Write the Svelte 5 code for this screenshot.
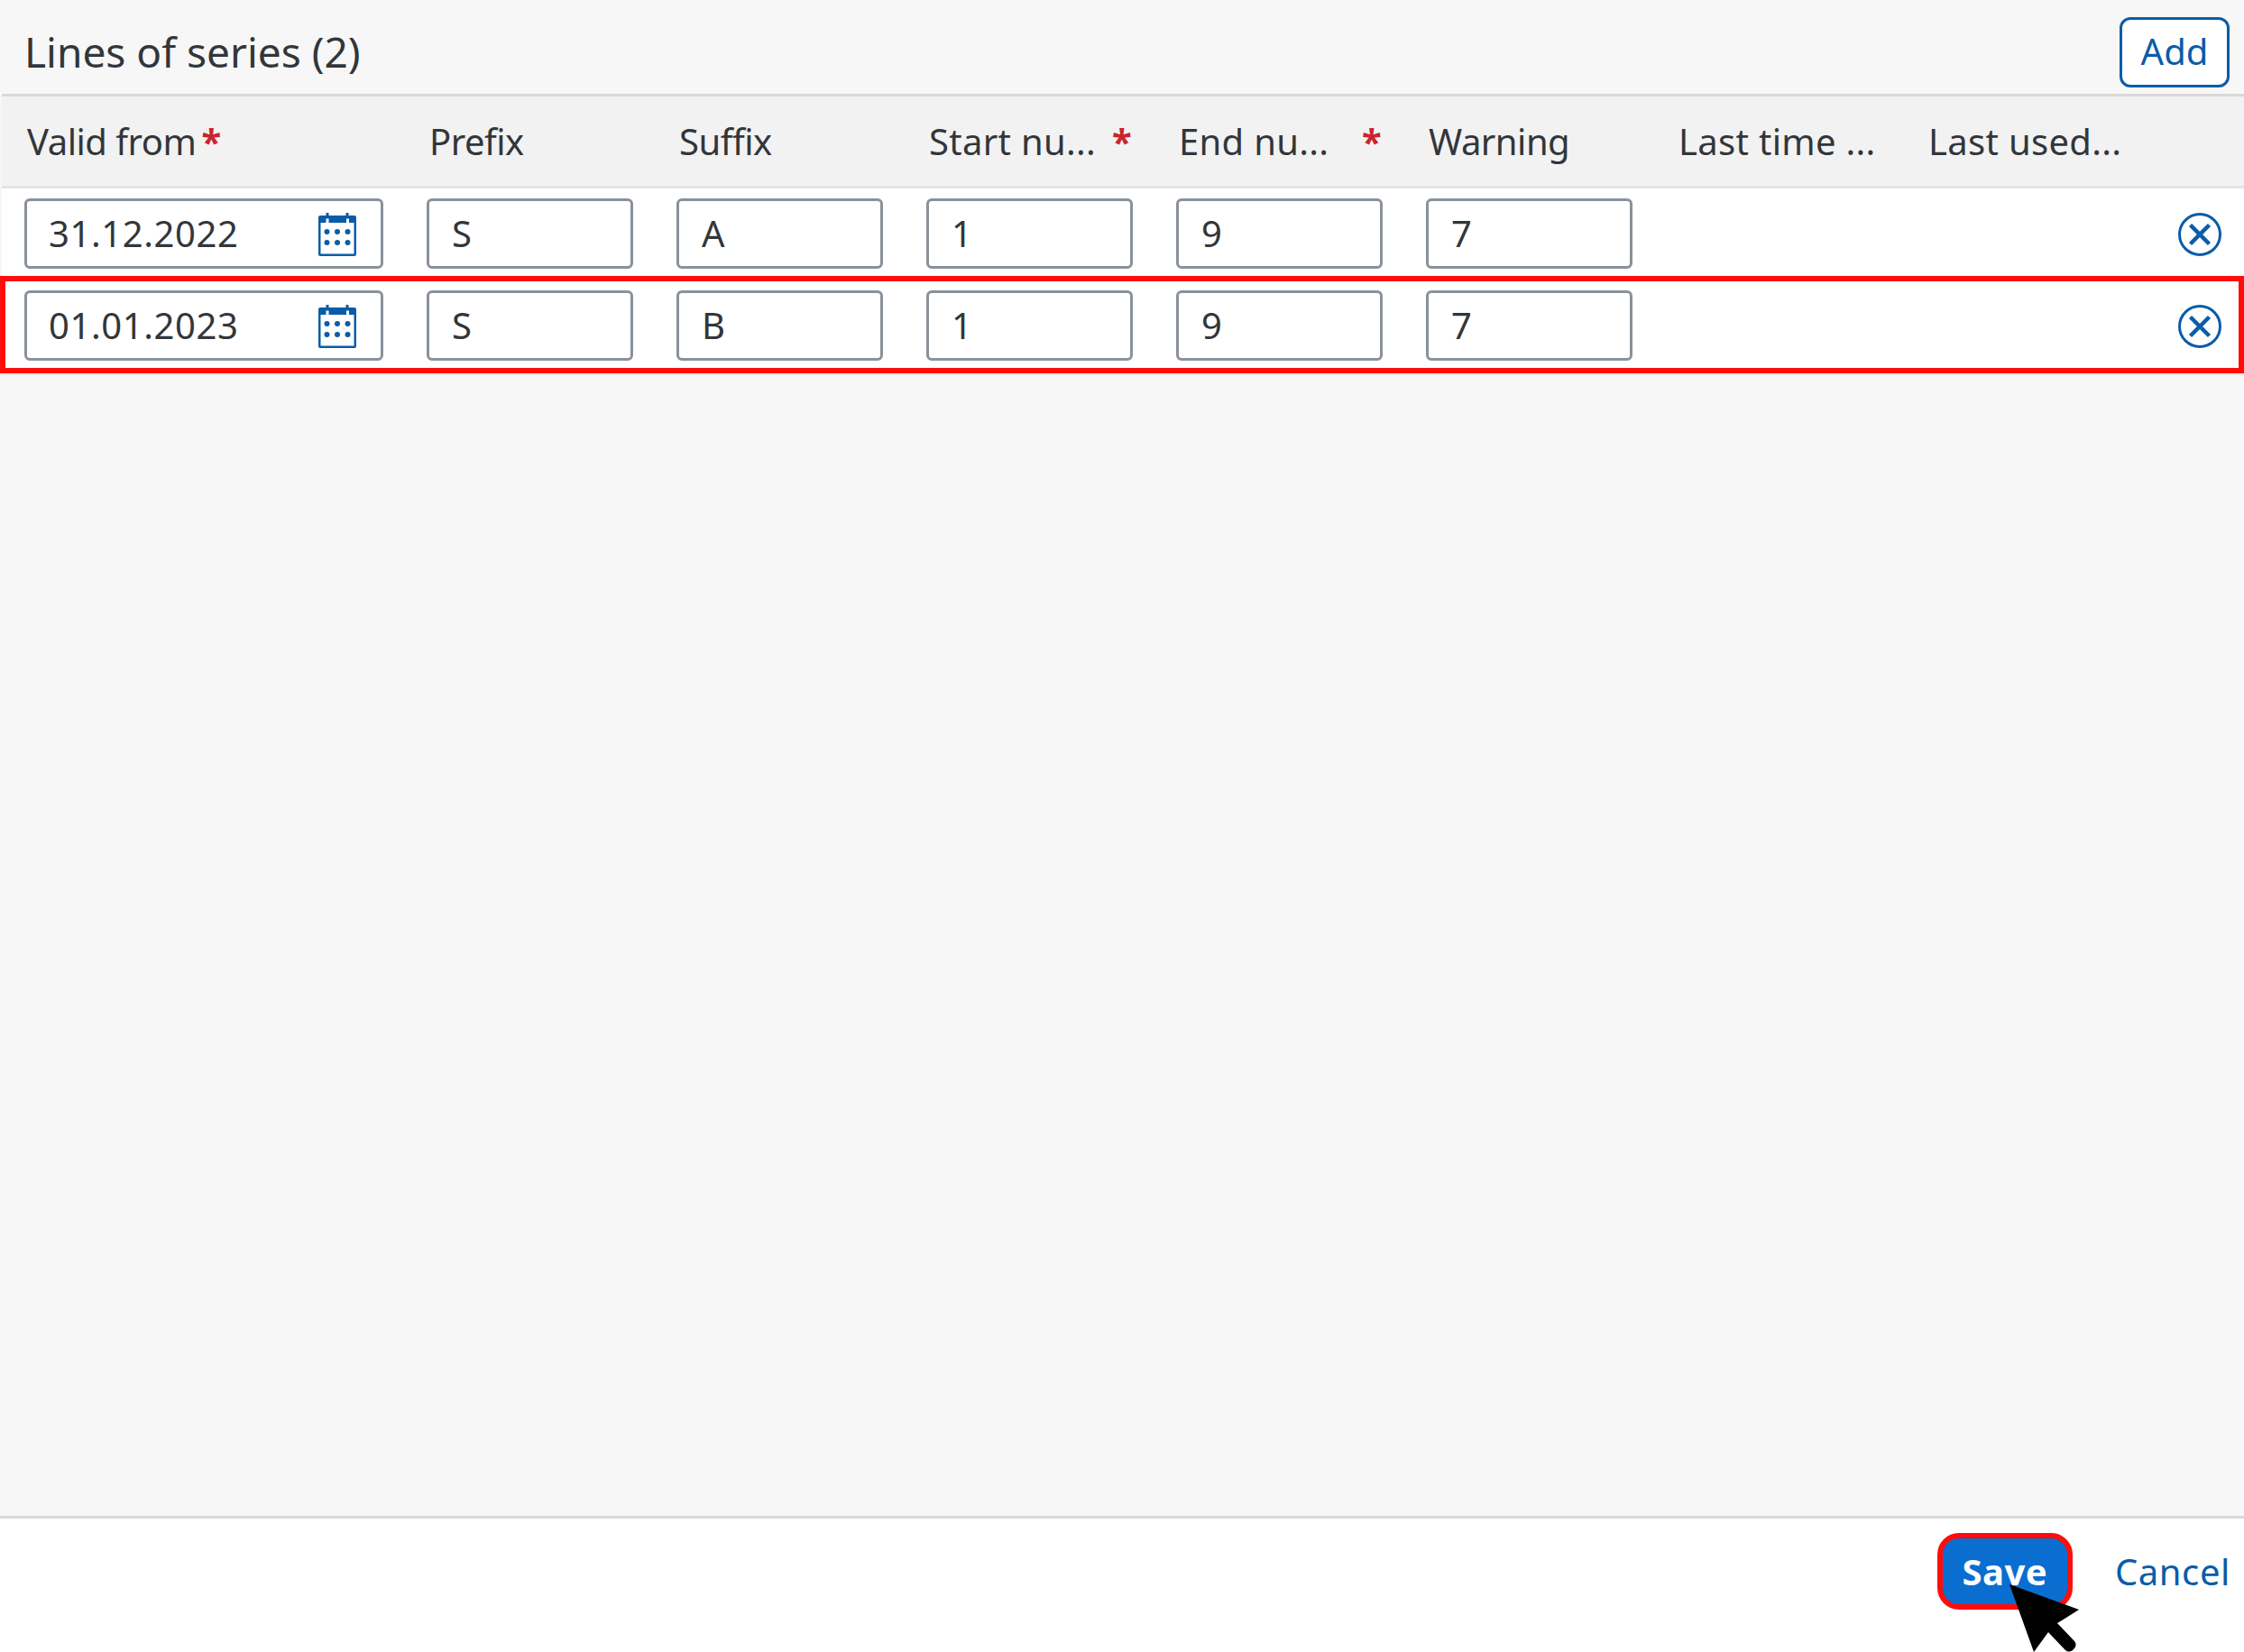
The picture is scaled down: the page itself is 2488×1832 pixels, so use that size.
<script>
  const columns = [
    { label: "Valid from", required: true, tight: true },
    { label: "Prefix" },
    { label: "Suffix" },
    { label: "Start nu...", required: true, cut: true },
    { label: "End nu...", required: true, cut: true },
    { label: "Warning" },
    { label: "Last time ...", cut: true },
    { label: "Last used...", cut: true },
  ];

  const lines = [
    { from: "31.12.2022", values: ["S", "A", "1", "9", "7"] },
    { from: "01.01.2023", values: ["S", "B", "1", "9", "7"], marked: true },
  ];
</script>

<div class="page">
  <div class="toolbar">
    <h2>Lines of series (2)</h2>
    <button class="add">Add</button>
  </div>

  <div class="row head">
    {#each columns as col}
      <div class="th" class:cut={col.cut}>
        <span>{col.label}</span>
        {#if col.required}<span class="star" class:tight={col.tight}>*</span>{/if}
      </div>
    {/each}
  </div>

  {#each lines as line}
    <div class="row line" class:marked={line.marked}>
      <div class="cell">
        <div class="field">
          <span class="date">{line.from}</span>
          <svg class="cal" viewBox="0 0 42 48" width="42" height="48">
            <path fill="#0a5ca8" fill-rule="evenodd" d="M8.5 0h3v3h19V0h3v3H40a2 2 0 0 1 2 2v41a2 2 0 0 1-2 2H2a2 2 0 0 1-2-2V5a2 2 0 0 1 2-2h6.5zM2.5 11v34.5h37V11h-5.5V6.500h-3V11H11.500V6.500h-3V11z" />
            {#each [21, 33] as y}
              {#each [9.5, 21, 32.5] as x}
                <circle cx={x} cy={y} r="3" fill="#0a5ca8" />
              {/each}
            {/each}
          </svg>
        </div>
      </div>
      {#each line.values as value}
        <div class="cell"><div class="field">{value}</div></div>
      {/each}
      <div class="cell"></div>
      <div class="cell"></div>
      <div class="cell action">
        <svg viewBox="0 0 48 48" width="48" height="48" fill="none" stroke="#0a5ca8">
          <circle cx="24" cy="24" r="22.5" stroke-width="3" />
          <path d="M13.500 13.500l21 21M34.500 13.500l-21 21" stroke-width="4.500" />
        </svg>
      </div>
    </div>
  {/each}

  <div class="rest"></div>

  <div class="footer">
    <button class="save">
      Save
      <svg class="pointer" viewBox="0 0 78 75" width="78" height="75">
        <path d="M0 0l77 28-24 15 19 20a6 6 0 0 1 0 8l-1 1a6 6 0 0 1-9 1L43 53 27 75z" fill="#000" />
      </svg>
    </button>
    <button class="cancel">Cancel</button>
  </div>
</div>

<style>
  :global(body) {
    font-family: "Noto Sans", sans-serif;
    color: #32363a;
    background: #f7f7f7;
  }

  .page {
    display: flex;
    flex-direction: column;
    height: 100vh;
  }

  .toolbar {
    display: flex;
    align-items: center;
    justify-content: space-between;
    box-sizing: border-box;
    height: 104px;
    padding: 12px 16px 0 25px;
    margin-left: 2px;
    box-shadow: 0 3px 0 #d9d9d9;
    margin-bottom: 3px;
  }

  h2 {
    margin: -2px 0 0;
    font-size: 46px;
    font-weight: 400;
  }

  button {
    font-family: inherit;
    padding: 0;
    border: none;
    background: none;
  }

  .add {
    width: 122px;
    height: 78px;
    padding-bottom: 3px;
    font-size: 40px;
    color: #0a5ca8;
    background: #fff;
    border: 3px solid #0a5ca8;
    border-radius: 12px;
  }

  .row {
    display: grid;
    grid-template-columns: 446px repeat(7, 277px) 1fr;
    margin-left: 2px;
  }

  .head {
    height: 99px;
    align-items: center;
    background: #f2f2f2;
    border-bottom: 3px solid #e5e5e5;
    font-size: 40px;
    letter-spacing: -0.5px;
  }

  .th {
    display: flex;
    padding-left: 28px;
    padding-right: 24px;
    white-space: nowrap;
  }

  .th.cut {
    letter-spacing: 0.3px;
  }

  .star {
    margin-left: auto;
    color: #c9252d;
    font-weight: 700;
  }

  .star.tight {
    margin-left: 6px;
  }

  .line {
    height: 97px;
    padding-top: 11px;
    box-sizing: border-box;
    background: #fff;
  }

  .line.marked {
    height: 108px;
    padding-top: 16px;
    margin-left: 0;
    padding-left: 2px;
    box-shadow: inset 0 0 0 6px #ff0d0d, 0 2px 0 #e5e5e5;
  }

  .cell {
    padding: 0 23px 0 25px;
  }

  .field {
    display: flex;
    align-items: center;
    justify-content: space-between;
    box-sizing: border-box;
    height: 78px;
    padding: 0 27px 2px 25px;
    font-size: 40px;
    background: #fff;
    border: 3px solid #89919a;
    border-radius: 6px;
  }

  .date {
    margin-left: -1px;
    letter-spacing: 0.6px;
  }

  .cal {
    margin-top: 4px;
  }

  .action {
    display: flex;
    justify-content: flex-end;
    align-items: flex-start;
    padding: 16px 25px 0 0;
  }

  .rest {
    flex: 1;
  }

  .footer {
    display: flex;
    justify-content: flex-end;
    align-items: flex-start;
    gap: 47px;
    box-sizing: border-box;
    height: 151px;
    padding: 16px 15px 0 0;
    background: #fff;
    border-top: 3px solid #d9d9d9;
  }

  .save {
    position: relative;
    box-sizing: border-box;
    width: 150px;
    height: 85px;
    font-size: 40px;
    font-weight: 700;
    letter-spacing: 0.5px;
    color: #fff;
    background: #0a6ed1;
    border: 6px solid #ff0d0d;
    border-radius: 24px;
  }

  .pointer {
    position: absolute;
    left: 74px;
    top: 51px;
  }

  .cancel {
    height: 85px;
    font-size: 40px;
    letter-spacing: 0.6px;
    color: #0a5ca8;
  }
</style>
